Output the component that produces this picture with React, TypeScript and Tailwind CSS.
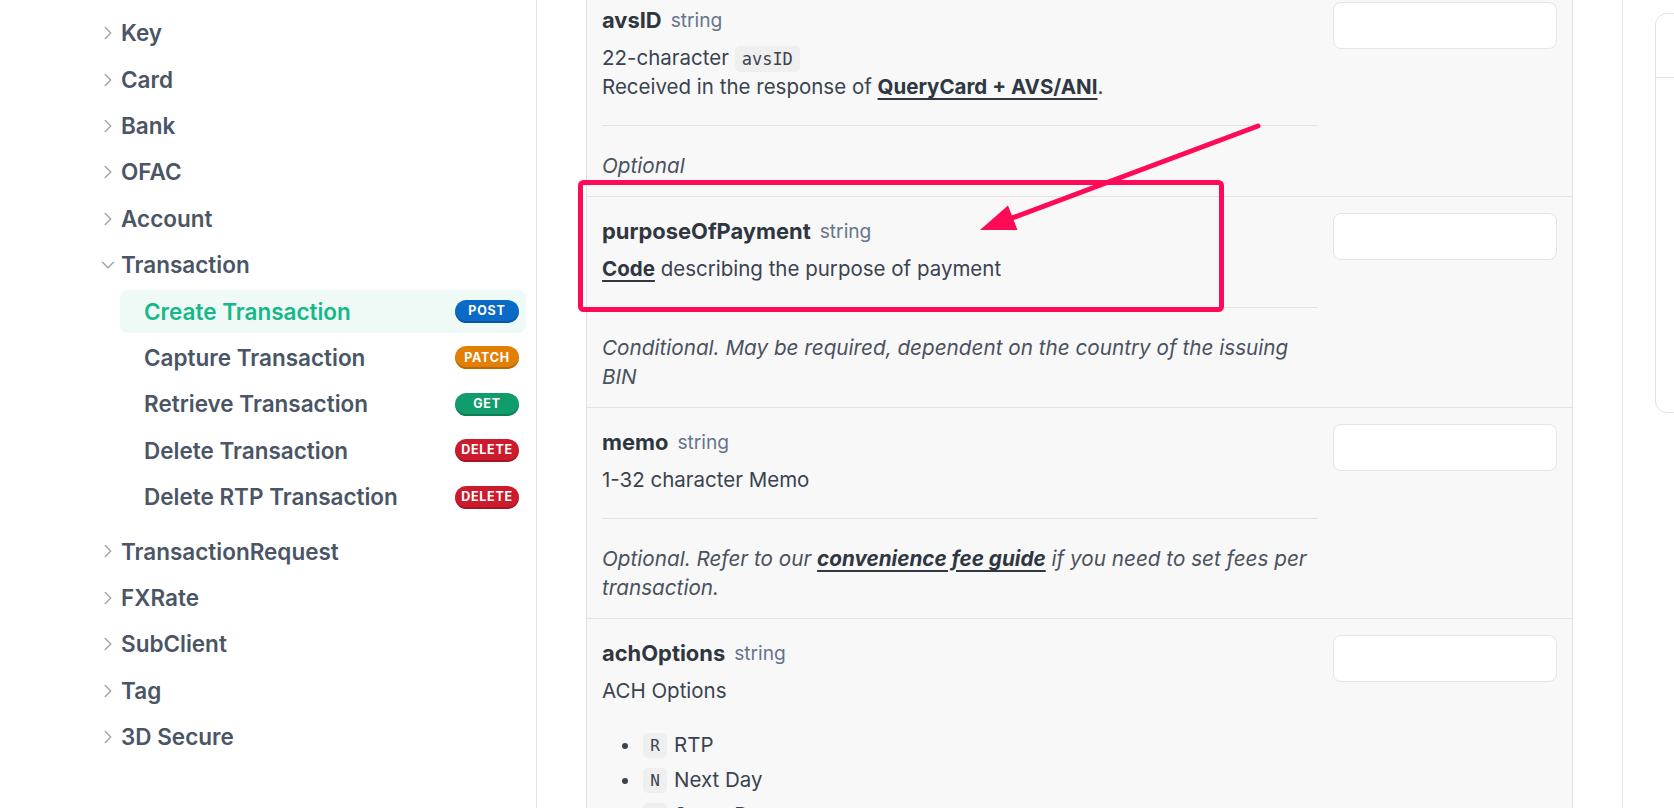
import React from "react";
import { ChevronRight, ChevronDown } from "lucide-react";

type Method = "POST" | "PATCH" | "GET" | "DELETE";

const badgeClass: Record<Method, string> = {
  POST: "bg-[#0a6ac6]",
  PATCH: "bg-[#e27f06]",
  GET: "bg-[#119c6c]",
  DELETE: "bg-[#cc1b2d]",
};

function Badge({ m }: { m: Method }) {
  return (
    <span
      className={`${badgeClass[m]} w-[64px] h-[23px] rounded-full flex items-center justify-center text-white text-[12.5px] font-bold tracking-[0.06em] shadow-[inset_0_-2px_0_rgba(0,0,0,0.18)]`}
    >
      {m}
    </span>
  );
}

function Heading({ label, open }: { label: string; open?: boolean }) {
  return (
    <div className="h-[46.4px] flex items-center">
      <span className="w-[22px] h-[22px] flex items-center justify-center text-[#a0a6b0]">
        {open ? (
          <ChevronDown size={22} strokeWidth={1.6} />
        ) : (
          <ChevronRight size={22} strokeWidth={1.6} />
        )}
      </span>
      <span className="ml-[2px] text-[22.5px] font-semibold text-[#4a5565]">{label}</span>
    </div>
  );
}

function SubItem({ label, m, active }: { label: string; m: Method; active?: boolean }) {
  return (
    <div className="h-[46.4px] flex items-center">
      <div
        className={`w-full h-[43px] rounded-[8px] flex items-center justify-between pl-[24px] pr-[7px] ${
          active ? "bg-[#effaf7]" : ""
        }`}
      >
        <span
          className={`text-[22.5px] font-semibold ${active ? "text-[#14b889]" : "text-[#4a5565]"}`}
        >
          {label}
        </span>
        <Badge m={m} />
      </div>
    </div>
  );
}

function Code({ children }: { children: React.ReactNode }) {
  return (
    <code className="font-['DejaVu_Sans_Mono',monospace] text-[17px] leading-[20px] bg-[#efefef] rounded-[5px] px-[7px] py-[3px] text-[#3a4350]">
      {children}
    </code>
  );
}

function Link({ children }: { children: React.ReactNode }) {
  return (
    <span className="font-bold text-[#2f3742] underline decoration-2 underline-offset-[4px]">
      {children}
    </span>
  );
}

function Row({
  name,
  desc,
  note,
  extra,
  last,
}: {
  name: string;
  desc: React.ReactNode;
  note?: React.ReactNode;
  extra?: React.ReactNode;
  last?: boolean;
}) {
  return (
    <div className={`flex gap-4 pt-4 px-[15px] ${last ? "" : "border-b border-[#e2e2e2]"}`}>
      <div className="flex-1 min-w-0">
        <div className="h-[36px] flex items-center">
          <span className="text-[21.9px] font-bold text-[#2f3640]">{name}</span>
          <span className="ml-[9px] text-[19.2px] text-[#66758c]">string</span>
        </div>
        <div className="mt-[5px] text-[20.5px] leading-[29px] text-[#3a4350]">{desc}</div>
        {extra}
        {note !== undefined && (
          <>
            <div className="mt-[24px] border-t border-[#e2e2e2]" />
            <div className="pt-[25px] pb-[16px] text-[20.7px] leading-[29px] italic text-[#4a5260]">
              {note}
            </div>
          </>
        )}
      </div>
      <div className="w-[224px] shrink-0">
        <div className="h-[47px] bg-white border border-[#e4e4e4] rounded-[8px]" />
      </div>
    </div>
  );
}

function ListItem({ k, label }: { k: string; label: string }) {
  return (
    <div className="h-[35px] flex items-center">
      <span className="w-[6px] h-[6px] rounded-full bg-[#3a4350] ml-[20px]" />
      <span className="ml-[15px] w-[24px] h-[25px] rounded-[5px] bg-[#efefef] flex items-center justify-center font-['DejaVu_Sans_Mono',monospace] text-[16px] text-[#3a4350]">
        {k}
      </span>
      <span className="ml-[7px] text-[20.5px] text-[#3a4350]">{label}</span>
    </div>
  );
}

export default function App() {
  return (
    <div className="relative w-[1674px] h-[808px] overflow-hidden bg-white flex font-['Inter',sans-serif]">
      {/* Sidebar */}
      <aside className="w-[537px] shrink-0 h-full border-r border-[#e6e6e6] pt-[10px] pl-[97px] pr-[10px]">
        <Heading label="Key" />
        <Heading label="Card" />
        <Heading label="Bank" />
        <Heading label="OFAC" />
        <Heading label="Account" />
        <Heading label="Transaction" open />
        <div className="ml-[23px]">
          <SubItem label="Create Transaction" m="POST" active />
          <SubItem label="Capture Transaction" m="PATCH" />
          <SubItem label="Retrieve Transaction" m="GET" />
          <SubItem label="Delete Transaction" m="DELETE" />
          <SubItem label="Delete RTP Transaction" m="DELETE" />
        </div>
        <div className="mt-[8px]">
          <Heading label="TransactionRequest" />
          <Heading label="FXRate" />
          <Heading label="SubClient" />
          <Heading label="Tag" />
          <Heading label="3D Secure" />
        </div>
      </aside>

      {/* Main */}
      <main className="flex-1 flex h-full">
        <div className="ml-[49px] w-[987px] shrink-0 h-full">
          <div className="-mt-[14px] bg-[#f8f8f8] border-x border-[#e2e2e2] min-h-[830px]">
            <Row
              name="avsID"
              desc={
                <>
                  22-character <Code>avsID</Code>
                  <br />
                  Received in the response of <Link>QueryCard + AVS/ANI</Link>.
                </>
              }
              note="Optional"
            />
            <Row
              name="purposeOfPayment"
              desc={
                <>
                  <Link>Code</Link> describing the purpose of payment
                </>
              }
              note="Conditional. May be required, dependent on the country of the issuing BIN"
            />
            <Row
              name="memo"
              desc="1-32 character Memo"
              note={
                <>
                  Optional. Refer to our <Link>convenience fee guide</Link> if you need to set fees
                  per transaction.
                </>
              }
            />
            <Row
              name="achOptions"
              desc="ACH Options"
              last
              extra={
                <div className="mt-[23px]">
                  <ListItem k="R" label="RTP" />
                  <ListItem k="N" label="Next Day" />
                  <ListItem k="S" label="Same Day" />
                </div>
              }
            />
          </div>
        </div>
        <div className="ml-[49px] flex-1 h-full border-l border-[#e6e6e6] pl-[32px] pt-[13px]">
          <div className="w-[200px] h-[400px] border border-[#e2e2e2] rounded-[12px]">
            <div className="h-[64px] border-b border-[#e2e2e2]" />
          </div>
        </div>
      </main>

      {/* Annotation overlay */}
      <svg
        className="absolute inset-0 pointer-events-none"
        width={1674}
        height={808}
        viewBox="0 0 1674 808"
      >
        <rect
          x={580.5}
          y={182.5}
          width={641}
          height={127}
          rx={3}
          fill="none"
          stroke="#ff0a56"
          strokeWidth={5}
        />
        <line
          x1={1258}
          y1={126}
          x2={1013}
          y2={217.7}
          stroke="#ff0a56"
          strokeWidth={5}
          strokeLinecap="round"
        />
        <polygon points="980,230 1008,205.5 1017.5,230" fill="#ff0a56" />
      </svg>
    </div>
  );
}
